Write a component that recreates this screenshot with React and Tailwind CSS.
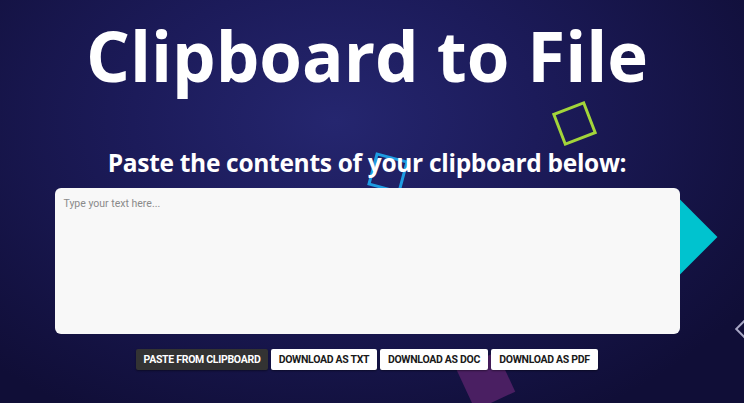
import React from 'react';

const BUTTONS = [
  { label: 'Paste from clipboard', w: 'w-[132px]', dark: true },
  { label: 'Download as TXT', w: 'w-[106px]' },
  { label: 'Download as DOC', w: 'w-[108px]' },
  { label: 'Download as PDF', w: 'w-[107px]' },
];

export default function App() {
  return (
    <div className="relative h-[403px] w-full overflow-hidden bg-[radial-gradient(ellipse_at_45%_30%,#25266f_0%,#1c1b5a_35%,#100e37_85%)]">
      {/* floating shapes */}
      <div className="absolute left-[557px] top-[106px] h-[35px] w-[35px] rotate-[-21deg] border-[3px] border-[#a3d53a]" />
      <div className="absolute left-[371px] top-[156px] h-[34px] w-[34px] rotate-[15deg] border-[3px] border-[#1e9de2]" />
      <div className="absolute left-[645px] top-[207px] h-[60px] w-[60px] rotate-45 bg-[#00c3cf]" />
      <div className="absolute left-[464px] top-[359px] h-[44px] w-[44px] rotate-[-25deg] bg-[#4a1f62]" />
      <div className="absolute left-[739px] top-[319px] h-[20px] w-[20px] rotate-45 border-2 border-[#a7a6c4]" />

      <div className="relative flex w-[734px] flex-col items-center" style={{ fontFamily: '"Open Sans", sans-serif' }}>
        <h1 className="mt-[11px] text-[69px] font-bold leading-[88px] text-white">
          Clipboard to File
        </h1>
        <h2 className="mt-[47px] text-[24.5px] font-bold leading-[34px] tracking-[-0.3px] text-white">
          Paste the contents of your clipboard below:
        </h2>
        <textarea
          className="mt-[8px] h-[146px] w-[625px] resize-none rounded-[6px] bg-[#f8f8f8] px-[9px] py-[8px] text-[10.5px] text-[#333] outline-none placeholder:text-[#8a8a8a]"
          style={{ fontFamily: 'Roboto, sans-serif' }}
          placeholder="Type your text here..."
        />
        <div className="mt-[15px] flex gap-[3px]" style={{ fontFamily: 'Roboto, sans-serif' }}>
          {BUTTONS.map((b) => (
            <button
              key={b.label}
              className={`${b.w} h-[21px] rounded-[2px] text-[10.5px] font-bold uppercase tracking-[-0.3px] shadow-[0_1px_2px_rgba(0,0,0,0.4)] ${
                b.dark ? 'bg-[#333333] text-white' : 'bg-white text-[#1a1a1a]'
              }`}
            >
              {b.label}
            </button>
          ))}
        </div>
      </div>
    </div>
  );
}
